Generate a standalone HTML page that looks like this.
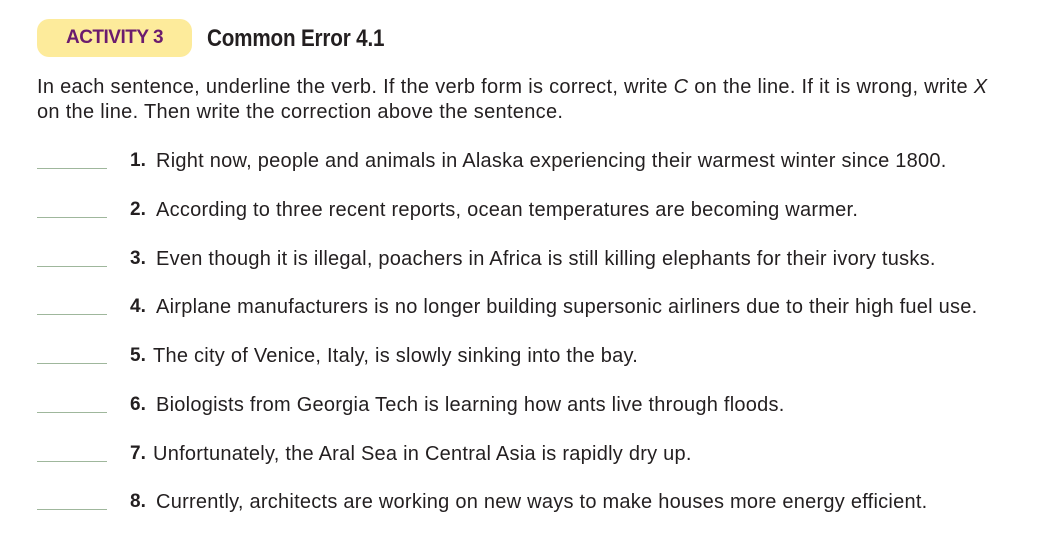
<!DOCTYPE html>
<html><head><meta charset="utf-8"><style>
body{margin:0;background:#fff;width:1057px;height:551px;overflow:hidden;font-family:"Liberation Sans",Arial,sans-serif;color:#231f20;position:relative}
.badge{position:absolute;left:37px;top:19px;width:155px;height:38px;background:#fdeb9b;border-radius:12px;color:#6b1b6e;font-weight:bold;font-size:19px;line-height:38px;text-align:center;letter-spacing:-0.5px}
.title{position:absolute;left:207px;top:25px;font-weight:bold;font-size:24px;transform:scaleX(0.86);transform-origin:left;letter-spacing:-0.2px}
.intro{position:absolute;left:37px;top:75px;font-size:20px;line-height:25px;width:1015px;letter-spacing:0.3px}
.row{position:absolute;left:0;height:24px;width:1057px}
.line{position:absolute;left:37px;top:19px;width:70px;height:1px;background:#9fb79c}
.num{position:absolute;left:130px;top:0;font-weight:bold;font-size:19px;line-height:24px}
.txt{position:absolute;left:156px;top:0;font-size:20px;line-height:24px;white-space:nowrap;letter-spacing:0.25px}
</style></head><body>
<div class="badge">ACTIVITY 3</div>
<div class="title">Common Error 4.1</div>
<div class="intro">In each sentence, underline the verb. If the verb form is correct, write <i>C</i> on the line. If it is wrong, write <i>X</i><br>on the line. Then write the correction above the sentence.</div>
<div class="row" style="top:149px"><div class="line"></div><div class="num">1.</div><div class="txt">Right now, people and animals in Alaska experiencing their warmest winter since 1800.</div></div>
<div class="row" style="top:198px"><div class="line"></div><div class="num">2.</div><div class="txt">According to three recent reports, ocean temperatures are becoming warmer.</div></div>
<div class="row" style="top:247px"><div class="line"></div><div class="num">3.</div><div class="txt">Even though it is illegal, poachers in Africa is still killing elephants for their ivory tusks.</div></div>
<div class="row" style="top:295px"><div class="line"></div><div class="num">4.</div><div class="txt">Airplane manufacturers is no longer building supersonic airliners due to their high fuel use.</div></div>
<div class="row" style="top:344px"><div class="line"></div><div class="num">5.</div><div class="txt" style="left:153px">The city of Venice, Italy, is slowly sinking into the bay.</div></div>
<div class="row" style="top:393px"><div class="line"></div><div class="num">6.</div><div class="txt">Biologists from Georgia Tech is learning how ants live through floods.</div></div>
<div class="row" style="top:442px"><div class="line"></div><div class="num">7.</div><div class="txt" style="left:153px">Unfortunately, the Aral Sea in Central Asia is rapidly dry up.</div></div>
<div class="row" style="top:490px"><div class="line"></div><div class="num">8.</div><div class="txt">Currently, architects are working on new ways to make houses more energy efficient.</div></div>
</body></html>
